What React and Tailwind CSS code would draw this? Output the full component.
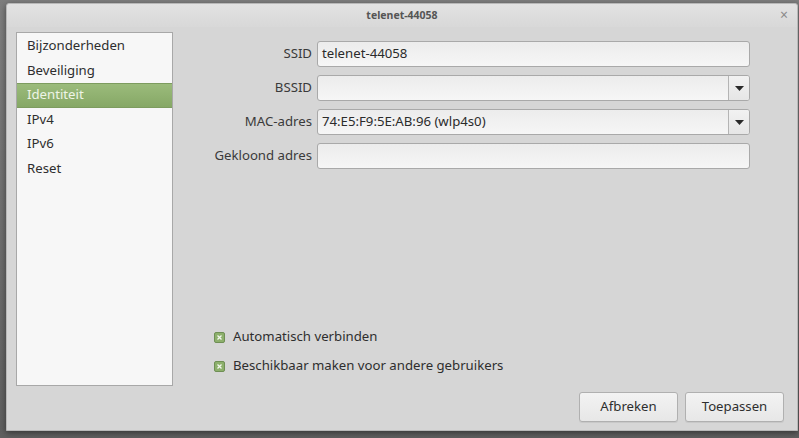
import React from 'react';

const font = { fontFamily: '"Noto Sans", "DejaVu Sans", sans-serif' };

const menuItems = ['Bijzonderheden', 'Beveiliging', 'Identiteit', 'IPv4', 'IPv6', 'Reset'];

const Caret = () => (
  <svg width="9" height="5" viewBox="0 0 9 5">
    <path d="M0 0h9L4.5 5z" fill="#2a2a2a" />
  </svg>
);

const Field = ({ value, combo }) => (
  <div className="flex h-[26px] rounded-[3px] border border-[#a9a9a9] bg-gradient-to-b from-[#ececec] to-[#f6f6f6] overflow-hidden">
    <div className="flex-1 flex items-center pl-[4px] text-[13.2px] text-[#2b2b2b]">{value}</div>
    {combo && (
      <div className="w-[21px] flex items-center justify-center border-l border-[#b4b4b4] bg-gradient-to-b from-[#f2f2f2] to-[#e6e6e6]">
        <Caret />
      </div>
    )}
  </div>
);

const Check = ({ label }) => (
  <div className="flex items-center gap-[8px] h-[20px]">
    <div className="w-[11px] h-[11px] rounded-[2px] border border-[#6f8f55] bg-[#8db06c] flex items-center justify-center">
      <svg width="5" height="5" viewBox="0 0 5 5">
        <path d="M0.5 0.5l4 4M4.5 0.5l-4 4" stroke="#f4f8ef" strokeWidth="1.3" />
      </svg>
    </div>
    <span className="text-[13.2px] text-[#2e2e2e]">{label}</span>
  </div>
);

const Button = ({ children, w }) => (
  <button className={`${w} h-[30px] rounded-[3px] border border-[#b0b0b0] bg-gradient-to-b from-[#f3f3f3] to-[#e7e7e7] text-[13.2px] text-[#2e2e2e] shadow-[0_1px_0_#c8c8c8]`}>
    {children}
  </button>
);

export default function App() {
  const rows = [
    { label: 'SSID', value: 'telenet-44058' },
    { label: 'BSSID', value: '', combo: true },
    { label: 'MAC-adres', value: '74:E5:F9:5E:AB:96 (wlp4s0)', combo: true },
    { label: 'Gekloond adres', value: '' },
  ];

  return (
    <div className="w-[799px] h-[438px] overflow-hidden bg-gradient-to-b from-[#7e7e7e] to-[#5f5f5f]" style={font}>
      <div className="ml-[6px] mt-[3px] w-[792px] h-[428px] flex flex-col bg-[#d6d6d6] rounded-t-[3px] border border-[#b8b8b8] shadow-[0_2px_6px_rgba(0,0,0,0.45)]">
        {/* title bar */}
        <div className="h-[23px] flex items-center justify-center relative bg-gradient-to-b from-[#e2e2e2] to-[#d8d8d8] rounded-t-[3px]">
          <span className="text-[10.5px] font-bold text-[#555555]">telenet-44058</span>
          <span className="absolute right-[9px] top-[3px] text-[14px] leading-[16px] text-[#8a8a8a]">×</span>
        </div>

        {/* body */}
        <div className="flex-1 flex flex-col px-[9px]">
          <div className="flex items-stretch mt-[5px] h-[354px]">
            <div className="w-[157px] bg-[#f7f7f7] border border-[#a8a8a8] pt-[1px]">
              {menuItems.map((item) => (
                <div
                  key={item}
                  className={
                    item === 'Identiteit'
                      ? 'h-[24.5px] flex items-center pl-[10px] text-[13.2px] text-[#eef4e6] bg-gradient-to-b from-[#9bbb7b] to-[#86a866] border-y border-[#7d9c5f]'
                      : 'h-[24.5px] flex items-center pl-[10px] text-[13.2px] text-[#2e2e2e]'
                  }
                >
                  {item}
                </div>
              ))}
            </div>

            <div className="flex-1 flex flex-col pt-[9px] pb-[10px]">
              <div className="grid grid-cols-[139px_433px] gap-x-[5px] gap-y-[8px] items-center">
                {rows.map((r) => (
                  <React.Fragment key={r.label}>
                    <div className="text-right text-[13.2px] text-[#3a3a3a]">{r.label}</div>
                    <Field value={r.value} combo={r.combo} />
                  </React.Fragment>
                ))}
              </div>
              <div className="mt-auto pl-[41px] flex flex-col gap-[9px]">
                <Check label="Automatisch verbinden" />
                <Check label="Beschikbaar maken voor andere gebruikers" />
              </div>
            </div>
          </div>

          <div className="flex justify-end gap-[7px] mt-[6px] pr-[4px]">
            <Button w="w-[99px]">Afbreken</Button>
            <Button w="w-[99px]">Toepassen</Button>
          </div>
        </div>
      </div>
    </div>
  );
}
